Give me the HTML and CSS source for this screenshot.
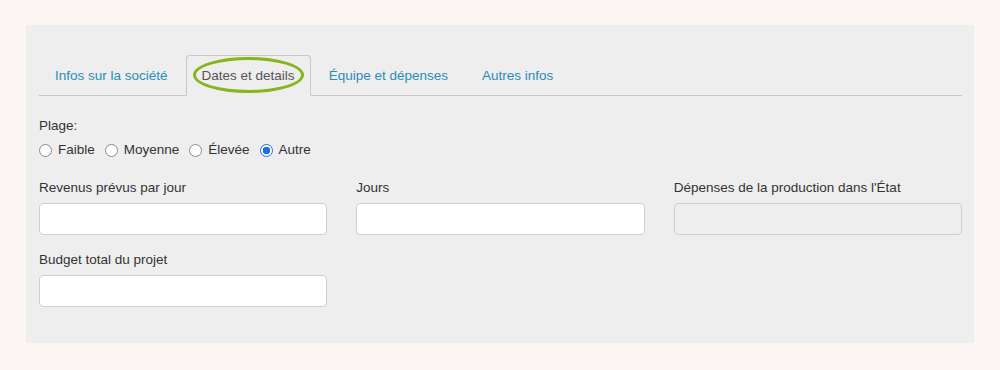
FILE: index.html
```html
<!DOCTYPE html>
<html lang="fr">

<head>
    <meta charset="UTF-8">
    <meta name="viewport" content="width=device-width, initial-scale=1.0">
    <title>Dates et details</title>
    <link rel="stylesheet" href="styles.css">
</head>

<body>
    <div class="panel">
        <ul class="nav-tabs">
            <li><a href="#">Infos sur la société</a></li>
            <li class="active"><a href="#">Dates et details</a><span class="highlight"></span></li>
            <li><a href="#">Équipe et dépenses</a></li>
            <li><a href="#">Autres infos</a></li>
        </ul>

        <div class="tab-content">
            <div class="field">
                <label class="field-label">Plage:</label>
                <div class="radios">
                    <label><input type="radio" name="plage"> Faible</label>
                    <label><input type="radio" name="plage"> Moyenne</label>
                    <label><input type="radio" name="plage"> Élevée</label>
                    <label><input type="radio" name="plage" checked> Autre</label>
                </div>
            </div>

            <div class="form-grid">
                <div class="form-group">
                    <label class="field-label">Revenus prévus par jour</label>
                    <input type="text" class="form-control">
                </div>
                <div class="form-group">
                    <label class="field-label">Jours</label>
                    <input type="text" class="form-control">
                </div>
                <div class="form-group">
                    <label class="field-label">Dépenses de la production dans l'État</label>
                    <input type="text" class="form-control" disabled>
                </div>
                <div class="form-group">
                    <label class="field-label">Budget total du projet</label>
                    <input type="text" class="form-control">
                </div>
            </div>
        </div>
    </div>
</body>

</html>
```

FILE: styles.css
```css
body {
    font-family: 'Liberation Sans', Arial, sans-serif;
    font-size: 13.5px;
    line-height: 20px;
    color: #333;
    background-color: #fcf5f4;
    margin: 0;
    padding: 25px 26px 27px;
}

.panel {
    background-color: #eeeeee;
    padding: 30px 12px 36px 13px;
}

.nav-tabs {
    list-style: none;
    margin: 0;
    padding: 0;
    display: flex;
    border-bottom: 1px solid #c8c8c8;
}

.nav-tabs li {
    position: relative;
    margin-right: 2px;
    margin-bottom: -1px;
}

.nav-tabs li a {
    display: block;
    padding: 10px 15px 9px;
    color: #2a8db5;
    text-decoration: none;
    border: 1px solid transparent;
    border-radius: 4px 4px 0 0;
}

.nav-tabs li.active a {
    color: #555;
    background-color: #eeeeee;
    border-color: #c8c8c8;
    border-bottom-color: transparent;
}

.highlight {
    position: absolute;
    left: 7px;
    top: 2px;
    width: 105px;
    height: 30px;
    border: 3px solid #86b51c;
    border-radius: 50%;
    pointer-events: none;
}

.tab-content {
    padding-top: 20px;
}

.field {
    margin-bottom: 17px;
}

.field-label {
    display: block;
    margin-bottom: 4px;
}

.radios {
    display: flex;
    gap: 10px;
}

.radios label {
    display: flex;
    align-items: center;
    gap: 6px;
}

.radios input {
    appearance: none;
    width: 13px;
    height: 13px;
    margin: 0;
    border: 1px solid #8a8a8a;
    border-radius: 50%;
    background-color: #fff;
}

.radios input:checked {
    border-color: #1a6ff0;
    background: radial-gradient(circle, #1a6ff0 0 3.5px, #fff 4px);
}

.form-grid {
    display: grid;
    grid-template-columns: repeat(3, 1fr);
    column-gap: 29px;
    row-gap: 14px;
}

.form-group .field-label {
    padding-top: 1px;
    margin-bottom: 5px;
}

.form-control {
    display: block;
    box-sizing: border-box;
    width: 100%;
    height: 32px;
    margin: 0;
    padding: 6px 12px;
    font-family: inherit;
    font-size: 14px;
    border: 1px solid #cfcfcf;
    border-radius: 4px;
    background-color: #fff;
}

.form-control:disabled {
    background-color: #eeeeee;
}
```
